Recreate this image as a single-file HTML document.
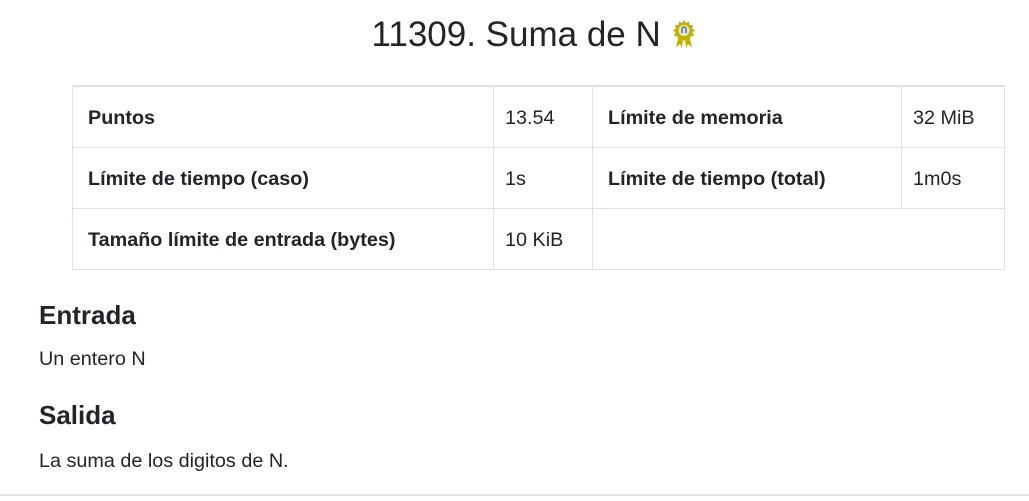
<!DOCTYPE html><html><head><style>
body{margin:0;width:1029px;height:501px;background:#fff;font-family:"Liberation Sans",sans-serif;color:#212529;position:relative;overflow:hidden}
h1{position:absolute;top:13px;left:0;width:1068px;text-align:center;margin:0;font-weight:400;font-size:35px;line-height:44px}
table{position:absolute;left:72px;top:85px;border-collapse:collapse;width:933px;font-size:19.8px}
td{border:1px solid #dee2e6;height:61px;padding:3px 15px 0 15px;box-sizing:border-box}
td.b{font-weight:bold}
h2{position:absolute;left:39px;margin:0;font-size:26px;font-weight:bold}
p{position:absolute;left:39px;margin:0;font-size:19.8px}
</style></head><body>
<h1>11309. Suma de N <svg width="26" height="30" viewBox="0 0 26 30" style="vertical-align:-3px"><path d="M8 16 L5 28 L9 25 L11 29 L12 19Z M18 16 L21 28 L17 25 L15 29 L14 19Z" fill="#c4b000"/><path d="M13 1 L15 4 L18 2.5 L18.5 6 L22 6 L21 9.5 L24 11 L21.5 13.5 L23 17 L19.5 17.5 L19 21 L16 19.5 L13 22 L10 19.5 L7 21 L6.5 17.5 L3 17 L4.5 13.5 L2 11 L5 9.5 L4 6 L7.5 6 L8 2.5 L11 4Z" fill="#c4b000"/><circle cx="13" cy="11.5" r="5.5" fill="#e8e8c8"/><path d="M11 14 V10 a2 2 0 0 1 4 0 V14" stroke="#4a7fb0" stroke-width="1.6" fill="none"/></svg></h1>
<table>
<tr style="border-top:2px solid #dee2e6"><td class="b" style="width:421px">Puntos</td><td style="width:99px;padding-left:11px">13.54</td><td class="b" style="width:309px">Límite de memoria</td><td style="padding-left:11px">32 MiB</td></tr>
<tr><td class="b">Límite de tiempo (caso)</td><td style="padding-left:11px">1s</td><td class="b">Límite de tiempo (total)</td><td style="padding-left:11px">1m0s</td></tr>
<tr><td class="b">Tamaño límite de entrada (bytes)</td><td style="padding-left:11px">10 KiB</td><td colspan="2"></td></tr>
</table>
<h2 style="top:300px">Entrada</h2>
<p style="top:348px">Un entero N</p>
<h2 style="top:400px">Salida</h2>
<p style="top:450px">La suma de los digitos de N.</p>
<div style="position:absolute;left:0;top:494px;width:1029px;height:2px;background:#e5e5e5"></div>
</body></html>
